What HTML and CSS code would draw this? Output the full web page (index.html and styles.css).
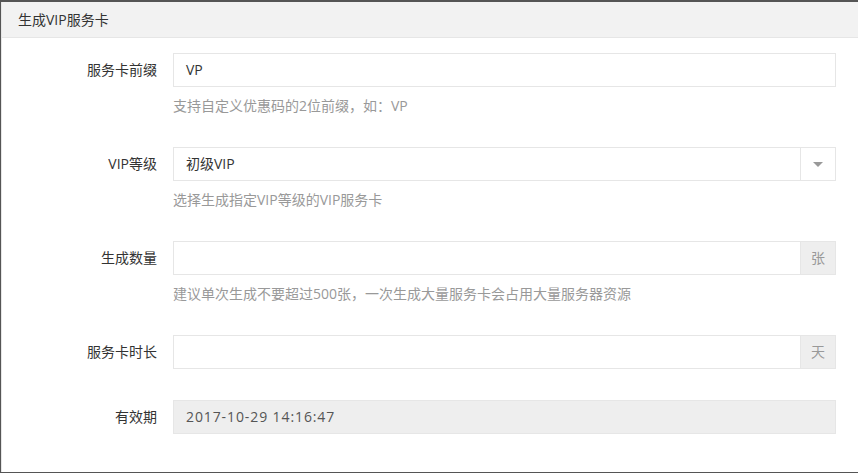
FILE: index.html
```html
<!DOCTYPE html>
<html lang="zh-CN">
<head>
    <meta charset="UTF-8">
    <title>生成VIP服务卡</title>
    <link rel="stylesheet" href="styles.css">
</head>
<body>
    <div class="panel">
        <div class="panel-head">生成VIP服务卡</div>
        <form class="panel-body">
            <div class="form-item">
                <label class="form-label">服务卡前缀</label>
                <div class="form-block">
                    <div class="input">VP</div>
                    <div class="form-tip">支持自定义优惠码的2位前缀，如：VP</div>
                </div>
            </div>
            <div class="form-item">
                <label class="form-label">VIP等级</label>
                <div class="form-block">
                    <div class="input select">
                        <span class="select-text">初级VIP</span>
                        <span class="select-arrow"><i></i></span>
                    </div>
                    <div class="form-tip">选择生成指定VIP等级的VIP服务卡</div>
                </div>
            </div>
            <div class="form-item">
                <label class="form-label">生成数量</label>
                <div class="form-block">
                    <div class="input group">
                        <span class="group-field"></span>
                        <span class="addon">张</span>
                    </div>
                    <div class="form-tip">建议单次生成不要超过500张，一次生成大量服务卡会占用大量服务器资源</div>
                </div>
            </div>
            <div class="form-item">
                <label class="form-label">服务卡时长</label>
                <div class="form-block">
                    <div class="input group">
                        <span class="group-field"></span>
                        <span class="addon">天</span>
                    </div>
                </div>
            </div>
            <div class="form-item">
                <label class="form-label">有效期</label>
                <div class="form-block">
                    <div class="input disabled">2017-10-29 14:16:47</div>
                </div>
            </div>
        </form>
    </div>
</body>
</html>
```

FILE: styles.css
```css
body, html {
    margin: 0;
    padding: 0;
    height: 100%;
    background-color: #555;
    font-family: "Open Sans", "Noto Sans CJK SC", sans-serif;
    color: #333;
}

.panel {
    margin: 2px 0 0 1px;
    height: 470px;
    background: #fff;
    border-left: 1px solid #e6e6e6;
    box-sizing: border-box;
}

.panel-head {
    height: 35px;
    line-height: 35px;
    padding-left: 16px;
    font-size: 14px;
    background: #f2f2f2;
    border-bottom: 1px solid #e6e6e6;
}

.panel-body {
    padding: 15px 22px 0 0;
    margin: 0;
}

.form-item {
    display: flex;
    margin-bottom: 31px;
}

.form-label {
    width: 171px;
    flex: none;
    text-align: right;
    font-size: 14px;
    line-height: 34px;
    padding-right: 16px;
    box-sizing: border-box;
}

.form-block {
    flex: 1;
}

.input {
    height: 34px;
    line-height: 32px;
    border: 1px solid #e6e6e6;
    box-sizing: border-box;
    padding-left: 12px;
    font-size: 14px;
    color: #333;
}

.form-tip {
    margin-top: 9px;
    line-height: 20px;
    font-size: 14px;
    color: #999;
}

.select,
.group {
    display: flex;
    padding-left: 0;
}

.select-text {
    flex: 1;
    padding-left: 12px;
}

.select-arrow {
    width: 34px;
    border-left: 1px solid #e6e6e6;
    display: flex;
    align-items: center;
    justify-content: center;
}

.select-arrow i {
    width: 0;
    height: 0;
    border-left: 5px solid transparent;
    border-right: 5px solid transparent;
    border-top: 5px solid #999;
}

.group-field {
    flex: 1;
}

.addon {
    width: 34px;
    text-align: center;
    background: #eee;
    border-left: 1px solid #e6e6e6;
    color: #999;
}

.disabled {
    background: #eee;
    color: #555;
    letter-spacing: 0.9px;
}
```
